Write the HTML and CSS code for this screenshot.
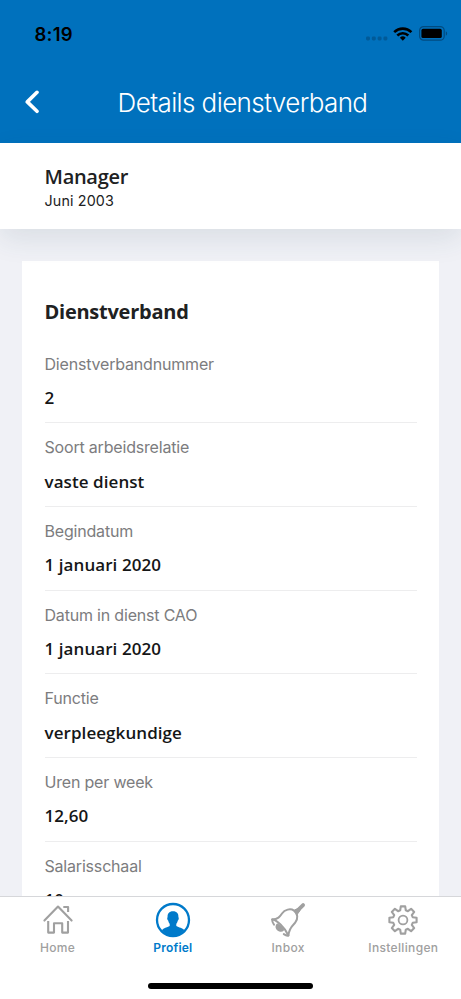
FILE: index.html
```html
<!DOCTYPE html>
<html lang="nl">
<head>
<meta charset="utf-8">
<title>Details dienstverband</title>
<link rel="stylesheet" href="styles.css">
</head>
<body>
<div class="app">
  <header class="top">
    <div class="status">
      <span class="time">8:19</span>
      <div class="indicators">
        <svg class="dots" width="22" height="5" viewBox="0 0 22 5"><g fill="#005a98"><rect x="0" y="0.5" width="4" height="4" rx="1.4"/><rect x="5.8" y="0.5" width="4" height="4" rx="1.4"/><rect x="11.6" y="0.5" width="4" height="4" rx="1.4"/><rect x="17.4" y="0.5" width="4" height="4" rx="1.4"/></g></svg>
        <svg class="wifi" width="20" height="14" viewBox="0 0 20 14" fill="none" stroke="#000" stroke-width="2.6"><path d="M1.2 5.1a12.5 12.5 0 0 1 17.2 0"/><path d="M4.3 8.5a8 8 0 0 1 11 0"/><path d="M6.9 10.7a4.2 4.2 0 0 1 5.8 0L9.8 13.8z" fill="#000" stroke="none"/></svg>
        <svg width="29" height="15" viewBox="0 0 29 15"><rect x="0.6" y="0.6" width="24.6" height="13.6" rx="4" fill="none" stroke="#004b80" stroke-width="1.2"/><rect x="2.4" y="2.8" width="20.4" height="9.2" rx="1.6" fill="#000"/><path d="M26.8 5.2q1.3.6 1.3 2.3t-1.3 2.3z" fill="#004b80"/></svg>
      </div>
    </div>
    <div class="nav">
      <svg class="back" width="16" height="26" viewBox="0 0 16 26" fill="none" stroke="#fff" stroke-width="3.6" stroke-linecap="round" stroke-linejoin="round"><path d="M13 2.3 3.3 11.9l9.7 9.4"/></svg>
      <h1>Details dienstverband</h1>
    </div>
  </header>
  <section class="summary">
    <h2>Manager</h2>
    <p>Juni 2003</p>
  </section>
  <main>
    <section class="card">
      <h3>Dienstverband</h3>
      <dl>
        <div class="row"><dt>Dienstverbandnummer</dt><dd>2</dd></div>
        <div class="row"><dt>Soort arbeidsrelatie</dt><dd>vaste dienst</dd></div>
        <div class="row"><dt>Begindatum</dt><dd>1 januari 2020</dd></div>
        <div class="row"><dt>Datum in dienst CAO</dt><dd>1 januari 2020</dd></div>
        <div class="row"><dt>Functie</dt><dd>verpleegkundige</dd></div>
        <div class="row"><dt>Uren per week</dt><dd>12,60</dd></div>
        <div class="row"><dt>Salarisschaal</dt><dd>10</dd></div>
      </dl>
    </section>
  </main>
  <footer>
    <nav class="tabs">
      <div class="tab">
        <svg width="36" height="36" viewBox="0 0 36 36" fill="none" stroke="#a0a0a0" stroke-width="2.1" stroke-linejoin="round"><path d="M4.4 18.6 18 4.6l13.6 14" stroke-linecap="round"/><path d="M8.2 19v11.6h5.8v-9.4h8.2v9.4H28V19"/><path d="M23.3 5h4.8v5"/></svg>
        <span>Home</span>
      </div>
      <div class="tab active">
        <svg width="36" height="36" viewBox="0 0 36 36"><circle cx="18" cy="18" r="16" fill="none" stroke="#007aca" stroke-width="2.3"/><path d="M18 9.3c3.9 0 5.7 2.4 5.4 6 .8.3.3 3-.7 3.5-.2 1.4-.7 2.3-1.4 2.9v2.3c2.7 1.8 6.2 1.7 8 4.2A16 16 0 0 1 18 34.2a16 16 0 0 1-11.2-6c1.8-2.5 5.2-2.4 7.9-4.2v-2.3c-.7-.6-1.2-1.5-1.4-2.9-1-.5-1.5-3.2-.7-3.5-.3-3.6 1.5-6 5.4-6z" fill="#007aca"/></svg>
        <span>Profiel</span>
      </div>
      <div class="tab">
        <svg width="36" height="36" viewBox="0 0 36 36" fill="none" stroke="#a0a0a0" stroke-width="2" stroke-linejoin="round" stroke-linecap="round"><path d="m27.2 8.8 5.9-5.7" stroke-width="3.8"/><path d="m24.8 7.8 4.4-1.8.8 2.6-3.2 4.4z" fill="#a0a0a0" stroke-width="1"/><path d="M2.2 17.5c5.8-.4 7.6-2.7 9.8-6C14.6 7.6 20.5 6 24 8.6c4 3 4.2 8.3 1.2 12.1-2.6 3.3-5.9 4.5-6.8 12.8"/><path d="M2.3 17.5c3.8.1 12.8 8 16.1 16M2.2 17.6c-.1 2.2.6 3.6 1.8 5.1m9.8 9.4c1.5 1.1 3.4 2.1 4.6 1.4"/><path d="M7.3 22.5c2.5 1.3 4.4 3.2 5.8 5.4-1.5 1.6-4.4.9-5.7-.8-1-1.3-1.1-3.1-.1-4.6z" fill="#a0a0a0"/></svg>
        <span>Inbox</span>
      </div>
      <div class="tab">
        <svg width="36" height="36" viewBox="0 0 36 36" fill="none" stroke="#a0a0a0" stroke-width="2.1" stroke-linejoin="round"><path transform="translate(18 18)" d="M-2.8-9.7-2.2-13.6H2.2L2.8-9.7 4.9-8.8 8.1-11.2 11.2-8.1 8.8-4.9 9.7-2.8 13.6-2.2V2.2L9.7 2.8 8.8 4.9 11.2 8.1 8.1 11.2 4.9 8.8 2.8 9.7 2.2 13.6H-2.2L-2.8 9.7-4.9 8.8-8.1 11.2-11.2 8.1-8.8 4.9-9.7 2.8-13.6 2.2V-2.2L-9.7-2.8-8.8-4.9-11.2-8.1-8.1-11.2-4.9-8.8z"/><circle cx="18" cy="18" r="4.4" stroke-width="1.8"/></svg>
        <span>Instellingen</span>
      </div>
    </nav>
    <div class="home-bar"></div>
  </footer>
</div>
</body>
</html>
```
FILE: styles.css
```css
* { box-sizing: border-box; margin: 0; }
body { font-family: Inter, sans-serif; background: #f0f1f6; color: #202122; }
.app { height: 999px; display: flex; flex-direction: column; overflow: hidden; }
.top { height: 142.6px; background: #0071bd; flex: none; }
.status { height: 67px; padding: 0 13px 0 34.5px; display: flex; align-items: center; justify-content: space-between; color: #000; }
.time { font-size: 18.5px; font-weight: 600; letter-spacing: 0.2px; }
.indicators { display: flex; align-items: center; }
.dots { margin: 9px 5px 0 0; }
.wifi { margin-right: 6px; }
.nav { height: 71px; display: grid; grid-template-columns: 48px 1fr; align-items: center; padding: 0 24px; }
h1 { color: #fff; font-size: 26px; font-weight: 350; letter-spacing: -0.6px; text-align: center; padding-right: 24px; white-space: nowrap; }
.summary { height: 86px; flex: none; background: #fff; padding: 21px 44.5px 0; position: relative; box-shadow: 0 10px 28px rgba(40, 70, 90, .11); }
h2 { font: 600 20px/26px "Open Sans", sans-serif; letter-spacing: -.3px; }
.summary p { font-size: 14.3px; line-height: 22px; letter-spacing: .15px; }
main { flex: 1; min-height: 0; overflow: hidden; padding: 32.6px 22px 0; }
.card { background: #fff; padding: 35.4px 22.5px; height: 760px; }
h3 { font: 700 20px/30px "Open Sans", sans-serif; letter-spacing: -.25px; }
dl { padding-top: 13px; }
.row { height: 83.67px; border-bottom: 1.5px solid #ededee; padding-top: 12px; }
dt { font-size: 16px; line-height: 24px; letter-spacing: -.19px; color: #7c7c7e; }
dd { font: 600 17px/24px "Open Sans", sans-serif; letter-spacing: .07px; margin-top: 10.4px; color: #151617; }
footer { flex: none; height: 103.3px; position: relative; background: #fff; border-top: 1px solid #d6d7da; display: flex; flex-direction: column; align-items: center; }
.tabs { width: 100%; display: grid; grid-template-columns: repeat(4, 1fr); height: 89px; padding-top: 5px; }
.tab { display: flex; flex-direction: column; align-items: center; color: #a0a0a0; }
.tab span { font-size: 12px; line-height: 16px; font-weight: 500; margin-top: 2px; letter-spacing: .35px; }
.tab.active { color: #007aca; }
.tab.active span { font-weight: 600; letter-spacing: .2px; }
.home-bar { width: 165px; height: 6px; flex: none; margin-top: -3px; border-radius: 3px; background: #000; }
```
